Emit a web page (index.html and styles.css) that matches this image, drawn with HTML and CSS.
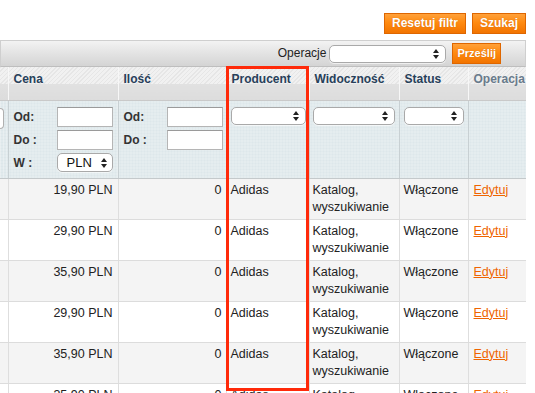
FILE: index.html
```html
<!DOCTYPE html>
<html lang="pl">
<head>
<meta charset="utf-8">
<title>Produkty</title>
<link rel="stylesheet" href="styles.css">
</head>
<body>
<div class="page">
  <div class="actions">
    <button class="btn">Resetuj filtr</button>
    <button class="btn">Szukaj</button>
  </div>
  <div class="toolbar">
    <span class="tb-label">Operacje</span>
    <span class="select tb-select"><svg class="arrows" width="6" height="10" viewBox="0 0 6 10"><path d="M3 0L6 4H0z M0 6h6L3 10z" fill="#222"/></svg></span>
    <button class="btn btn-small">Prześlij</button>
  </div>
  <table class="grid">
    <colgroup>
      <col class="c0"><col class="c1"><col class="c2"><col class="c3"><col class="c4"><col class="c5"><col class="c6">
    </colgroup>
    <thead>
      <tr class="head">
        <th></th>
        <th>Cena</th>
        <th>Ilość</th>
        <th>Producent</th>
        <th>Widoczność</th>
        <th>Status</th>
        <th class="muted">Operacja</th>
      </tr>
      <tr class="filter">
        <td><span class="cut-input"></span></td>
        <td>
          <div class="range">
            <span class="lbl">Od:</span><span class="input"></span>
            <span class="lbl">Do :</span><span class="input"></span>
            <span class="lbl">W :</span><span class="select cur">PLN<svg class="arrows" width="6" height="10" viewBox="0 0 6 10"><path d="M3 0L6 4H0z M0 6h6L3 10z" fill="#222"/></svg></span>
          </div>
        </td>
        <td>
          <div class="range">
            <span class="lbl">Od:</span><span class="input"></span>
            <span class="lbl">Do :</span><span class="input"></span>
          </div>
        </td>
        <td><span class="select full"><svg class="arrows" width="6" height="10" viewBox="0 0 6 10"><path d="M3 0L6 4H0z M0 6h6L3 10z" fill="#222"/></svg></span></td>
        <td><span class="select full"><svg class="arrows" width="6" height="10" viewBox="0 0 6 10"><path d="M3 0L6 4H0z M0 6h6L3 10z" fill="#222"/></svg></span></td>
        <td><span class="select full"><svg class="arrows" width="6" height="10" viewBox="0 0 6 10"><path d="M3 0L6 4H0z M0 6h6L3 10z" fill="#222"/></svg></span></td>
        <td></td>
      </tr>
    </thead>
    <tbody>
      <tr><td></td><td class="num">19,90 PLN</td><td class="num">0</td><td>Adidas</td><td>Katalog,<br>wyszukiwanie</td><td>Włączone</td><td><a href="#">Edytuj</a></td></tr>
      <tr><td></td><td class="num">29,90 PLN</td><td class="num">0</td><td>Adidas</td><td>Katalog,<br>wyszukiwanie</td><td>Włączone</td><td><a href="#">Edytuj</a></td></tr>
      <tr><td></td><td class="num">35,90 PLN</td><td class="num">0</td><td>Adidas</td><td>Katalog,<br>wyszukiwanie</td><td>Włączone</td><td><a href="#">Edytuj</a></td></tr>
      <tr><td></td><td class="num">29,90 PLN</td><td class="num">0</td><td>Adidas</td><td>Katalog,<br>wyszukiwanie</td><td>Włączone</td><td><a href="#">Edytuj</a></td></tr>
      <tr><td></td><td class="num">35,90 PLN</td><td class="num">0</td><td>Adidas</td><td>Katalog,<br>wyszukiwanie</td><td>Włączone</td><td><a href="#">Edytuj</a></td></tr>
      <tr><td></td><td class="num">35,90 PLN</td><td class="num">0</td><td>Adidas</td><td>Katalog,<br>wyszukiwanie</td><td>Włączone</td><td><a href="#">Edytuj</a></td></tr>
    </tbody>
  </table>
  <div class="highlight"></div>
</div>
</body>
</html>
```

FILE: styles.css
```css
html, body {
  margin: 0;
  padding: 0;
  background: #fff;
  overflow: hidden;
}
body {
  font-family: "Liberation Sans", Arial, sans-serif;
  font-size: 12px;
  line-height: 17px;
  color: #222;
}
.page {
  position: relative;
  width: 526px;
  height: 393px;
  overflow: hidden;
}
.actions {
  height: 40px;
  box-sizing: border-box;
  padding-top: 13px;
  display: flex;
  justify-content: flex-end;
  align-items: flex-start;
  gap: 6px;
}
.btn {
  font-family: "Liberation Sans", Arial, sans-serif;
  font-size: 12px;
  font-weight: bold;
  color: #fff;
  height: 21px;
  line-height: 19px;
  padding: 0 7px;
  margin: 0;
  border: 1px solid #de6600;
  border-radius: 0;
  background: linear-gradient(#ffa13a, #ff8a10 45%, #f27400);
  text-shadow: 0 0 1px rgba(160, 70, 0, 0.5);
  cursor: pointer;
}
.toolbar {
  height: 27px;
  box-sizing: border-box;
  border: 1px solid #cfcfcf;
  border-bottom-color: #bebebe;
  background: linear-gradient(#f3f3f3, #e6e6e6 40%, #d4d4d4);
  display: flex;
  align-items: center;
  justify-content: flex-end;
  padding-right: 24px;
}
.tb-label {
  color: #222;
  margin-right: 3px;
}
.select {
  display: inline-flex;
  align-items: center;
  justify-content: space-between;
  box-sizing: border-box;
  height: 18px;
  background: #fff;
  border: 1px solid #a9a9a9;
  border-radius: 5px;
  padding: 0 6px 0 9px;
  box-shadow: 0 1px 0 rgba(255,255,255,0.6);
}
.select .arrows {
  margin-left: auto;
}
.tb-select {
  width: 117px;
  margin-right: 6px;
}
.btn-small {
  height: 21px;
  font-size: 11px;
  padding: 0 4px;
}
.grid {
  width: 526px;
  table-layout: fixed;
  border-collapse: collapse;
  border-right: 1px solid #cfcfcf;
}
.c0 { width: 8px; }
.c1 { width: 110px; }
.c2 { width: 108px; }
.c3 { width: 83px; }
.c4 { width: 90px; }
.c5 { width: 69px; }
.c6 { width: 58px; }
.grid th,
.grid td {
  padding: 0;
  overflow: hidden;
  white-space: nowrap;
  border-left: 1px solid #d6d9da;
}
.grid tr > :first-child {
  border-left: none;
}
.grid .head th {
  height: 33px;
  box-sizing: border-box;
  vertical-align: top;
  text-align: left;
  padding: 4px 5px 0;
  font-weight: bold;
  color: #27405a;
  line-height: 16px;
  border-left-color: #f7f7f7;
  border-bottom: 1px solid #c9c9c9;
  background:
    repeating-linear-gradient(135deg, #e6e6e6 0 1px, #f1f1f1 1px 3px) top / 100% 17px no-repeat,
    linear-gradient(#e6e6e6, #dcdcdc);
}
.grid .head th.muted {
  color: #697b8c;
}
.grid .filter td {
  height: 78px;
  box-sizing: border-box;
  vertical-align: top;
  padding: 6px 5px 0;
  border-left-color: #c8d0d3;
  background-color: #dde7ea;
  background-image:
    repeating-linear-gradient(0deg, rgba(255,255,255,0.25) 0 1px, transparent 1px 3px),
    repeating-linear-gradient(90deg, rgba(255,255,255,0.25) 0 1px, transparent 1px 3px);
  border-bottom: 1px solid #c4c9cb;
}
.grid .filter td:first-child {
  padding: 6px 0 0;
}
.cut-input {
  display: block;
  width: 3px;
  height: 19px;
  margin-top: 1px;
  background: #fff;
  border: 1px solid #b0b0b0;
  border-left: none;
  border-radius: 0 4px 4px 0;
}
.range {
  display: grid;
  grid-template-columns: 43px 56px;
  row-gap: 3px;
  align-items: center;
}
.lbl {
  font-weight: bold;
  color: #333;
  line-height: 20px;
}
.input {
  display: block;
  box-sizing: border-box;
  height: 20px;
  background: #fff;
  border: 1px solid #b5b5b5;
  border-top-color: #9a9a9a;
}
.cur {
  height: 19px;
  width: 56px;
  font-size: 13px;
  padding: 0 5px 0 9px;
  color: #111;
}
.select.full {
  width: 100%;
}
.grid .filter td:nth-child(4) { padding-left: 4px; padding-right: 3px; }
.grid .filter td:nth-child(5) { padding-left: 3px; padding-right: 4px; }
.grid .filter td:nth-child(6) { padding-left: 4px; padding-right: 4px; }

.grid tbody td {
  height: 41px;
  box-sizing: border-box;
  vertical-align: top;
  padding: 3px 4px 0;
  font-size: 12.5px;
  border-bottom: 1px solid #dcdcdc;
  border-left-color: #dedede;
  background: #f4f4f4;
  color: #222;
}
.grid tbody tr:nth-child(even) td {
  background: #fff;
}
.grid tbody td:nth-child(5) {
  padding-left: 3px;
}
.grid tbody td:nth-child(7) {
  padding-left: 5px;
}
.grid tbody td.num {
  text-align: right;
  padding-right: 5px;
}
.grid tbody td:nth-child(3).num {
  padding-right: 4px;
}
.grid tbody a {
  color: #ef6400;
  text-decoration: underline;
}
.highlight {
  position: absolute;
  left: 226px;
  top: 66px;
  width: 83px;
  height: 325px;
  box-sizing: border-box;
  border: 3px solid #ff2a0a;
  pointer-events: none;
}
```
